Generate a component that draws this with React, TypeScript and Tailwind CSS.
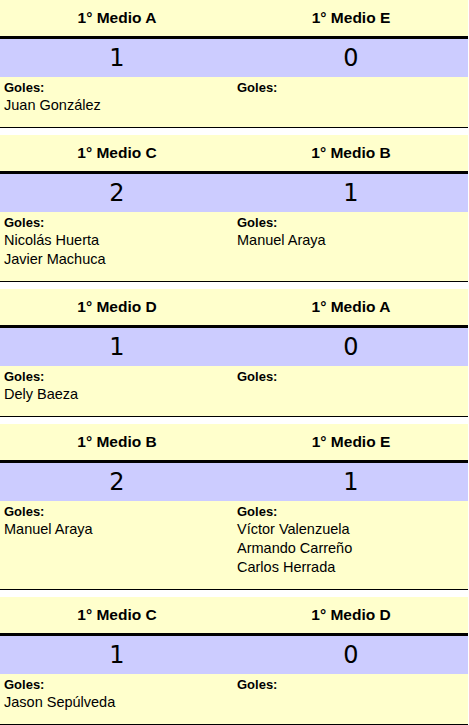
const MATCHES = [
  { home: "1° Medio A", away: "1° Medio E", homeScore: 1, awayScore: 0, homeGoals: ["Juan González"], awayGoals: [] },
  { home: "1° Medio C", away: "1° Medio B", homeScore: 2, awayScore: 1, homeGoals: ["Nicolás Huerta", "Javier Machuca"], awayGoals: ["Manuel Araya"] },
  { home: "1° Medio D", away: "1° Medio A", homeScore: 1, awayScore: 0, homeGoals: ["Dely Baeza"], awayGoals: [] },
  {
    home: "1° Medio B",
    away: "1° Medio E",
    homeScore: 2,
    awayScore: 1,
    homeGoals: ["Manuel Araya"],
    awayGoals: ["Víctor Valenzuela", "Armando Carreño", "Carlos Herrada"],
  },
  { home: "1° Medio C", away: "1° Medio D", homeScore: 1, awayScore: 0, homeGoals: ["Jason Sepúlveda"], awayGoals: [] },
];

type Match = (typeof MATCHES)[number];

function GoalsCell({ goals, className }: { goals: string[]; className: string }) {
  return (
    <div className={`pt-[2px] pb-[12px] ${className}`}>
      <div className="text-[13px] font-bold leading-[17px]">Goles:</div>
      {goals.map((name) => (
        <div key={name} className="text-[14.5px] leading-[19px]">
          {name}
        </div>
      ))}
    </div>
  );
}

function MatchCard({ match }: { match: Match }) {
  return (
    <div className="mb-[7px] w-[468px] bg-[#ffffcc] text-black">
      <div className="grid h-[39px] grid-cols-2 items-center border-b-[3px] border-black text-center text-[15.5px] font-bold">
        <div>{match.home}</div>
        <div>{match.away}</div>
      </div>
      <div className="grid h-[38px] grid-cols-2 items-center bg-[#ccccff] text-center font-['DejaVu_Sans',sans-serif] text-[24px]">
        <div>{match.homeScore}</div>
        <div>{match.awayScore}</div>
      </div>
      <div className="grid grid-cols-2 border-b border-black">
        <GoalsCell goals={match.homeGoals} className="pl-[4px]" />
        <GoalsCell goals={match.awayGoals} className="pl-[3px]" />
      </div>
    </div>
  );
}

export default function App() {
  return (
    <div className="min-h-screen bg-white font-['Liberation_Sans',Arial,sans-serif]">
      {MATCHES.map((match, i) => (
        <MatchCard key={i} match={match} />
      ))}
    </div>
  );
}
